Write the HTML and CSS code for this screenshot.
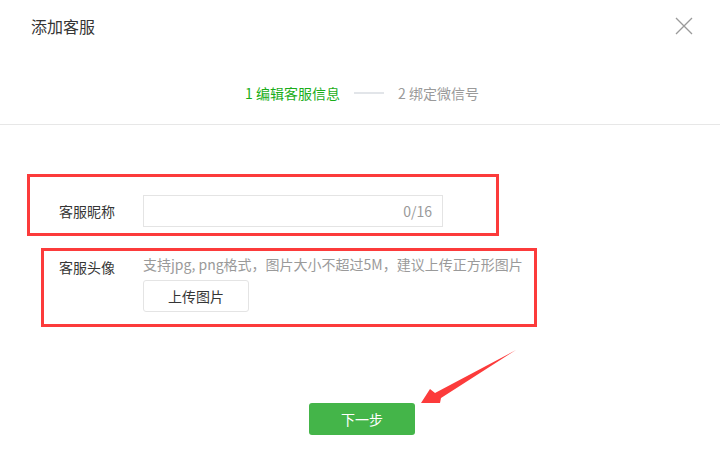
FILE: index.html
```html
<!DOCTYPE html>
<html lang="zh-CN">
  <head>
    <meta charset="UTF-8" />
    <meta name="viewport" content="width=device-width, initial-scale=1.0" />
    <title>添加客服</title>
    <link rel="stylesheet" href="styles.css">
  </head>
  <body>
    <div class="dialog">
      <div class="dialog-hd">
        <h3 class="dialog-title">添加客服</h3>
        <button class="dialog-close" type="button">
          <svg width="18" height="18" viewBox="0 0 18 18">
            <path d="M1 1L17 17M17 1L1 17" stroke="#9a9a9a" stroke-width="1.3" fill="none" />
          </svg>
        </button>
      </div>

      <div class="steps">
        <span class="step current">1 编辑客服信息</span>
        <span class="step-line"></span>
        <span class="step">2 绑定微信号</span>
      </div>

      <div class="dialog-bd">
        <div class="form-row">
          <label class="form-label">客服昵称</label>
          <div class="form-input">
            <input type="text" />
            <span class="counter">0/16</span>
          </div>
        </div>
        <div class="form-row top">
          <label class="form-label">客服头像</label>
          <div class="form-control">
            <p class="form-tips">支持jpg, png格式，图片大小不超过5M，建议上传正方形图片</p>
            <button class="btn-default" type="button">上传图片</button>
          </div>
        </div>
      </div>

      <div class="dialog-ft">
        <button class="btn-primary" type="button">下一步</button>
      </div>

      <!-- annotation marks -->
      <div class="mark mark-name"></div>
      <div class="mark mark-avatar"></div>
      <svg class="mark-arrow" width="120" height="75" viewBox="0 0 120 75">
        <polygon points="11,63 20,49 25,53 106,10 31,58 30,63" fill="#fc3b3b" />
      </svg>
    </div>
  </body>
</html>
```

FILE: styles.css
```css
body {
  margin: 0;
  font-family: "Noto Sans CJK SC", "Liberation Sans", sans-serif;
  color: #353535;
  background: #fff;
}

.dialog {
  position: relative;
  width: 720px;
  height: 465px;
  overflow: hidden;
}

.dialog-hd {
  display: flex;
  align-items: center;
  justify-content: space-between;
  height: 52px;
  padding: 0 27px 0 31px;
}

.dialog-title {
  margin: 0;
  font-size: 16px;
  font-weight: normal;
  line-height: 20px;
}

.dialog-close {
  display: flex;
  padding: 0;
  border: 0;
  background: none;
}

.steps {
  display: flex;
  align-items: center;
  justify-content: center;
  gap: 14px;
  padding: 31px 0 21px 4px;
  border-bottom: 1px solid #e7e7e7;
  font-size: 14px;
  line-height: 20px;
  color: #9a9a9a;
}

.step.current {
  color: #1aad19;
}

.step-line {
  width: 30px;
  height: 2px;
  background-color: #e2e5e9;
}

.dialog-bd {
  padding-top: 70px;
  font-size: 14px;
}

.form-row {
  display: flex;
  align-items: center;
  padding-left: 59px;
}

.form-row.top {
  align-items: flex-start;
  margin-top: 27px;
}

.form-label {
  width: 84px;
  line-height: 20px;
}

.form-row.top .form-label {
  padding-top: 3px;
}

.form-input {
  display: flex;
  align-items: center;
  box-sizing: border-box;
  width: 300px;
  height: 32px;
  padding: 0 10px;
  border: 1px solid #e4e4e4;
}

.form-input input {
  flex: 1;
  min-width: 0;
  border: 0;
  outline: none;
  font: inherit;
}

.counter {
  color: #9a9a9a;
}

.form-tips {
  margin: 0;
  line-height: 20px;
  color: #9a9a9a;
}

.btn-default {
  box-sizing: border-box;
  width: 106px;
  height: 32px;
  margin-top: 6px;
  border: 1px solid #e4e4e4;
  border-radius: 3px;
  background: #fff;
  font: inherit;
  font-size: 14px;
  color: #353535;
}

.dialog-ft {
  display: flex;
  justify-content: center;
  margin-top: 91px;
  padding-left: 4px;
}

.btn-primary {
  width: 106px;
  height: 32px;
  border: 0;
  border-radius: 3px;
  background-color: #44b549;
  font: inherit;
  font-size: 14px;
  color: #fff;
}

.mark {
  position: absolute;
  box-sizing: border-box;
  border: 3px solid #fc3b3b;
}

.mark-name {
  left: 27px;
  top: 174px;
  width: 472px;
  height: 62px;
}

.mark-avatar {
  left: 41px;
  top: 248px;
  width: 496px;
  height: 79px;
}

.mark-arrow {
  position: absolute;
  left: 410px;
  top: 340px;
}
```
